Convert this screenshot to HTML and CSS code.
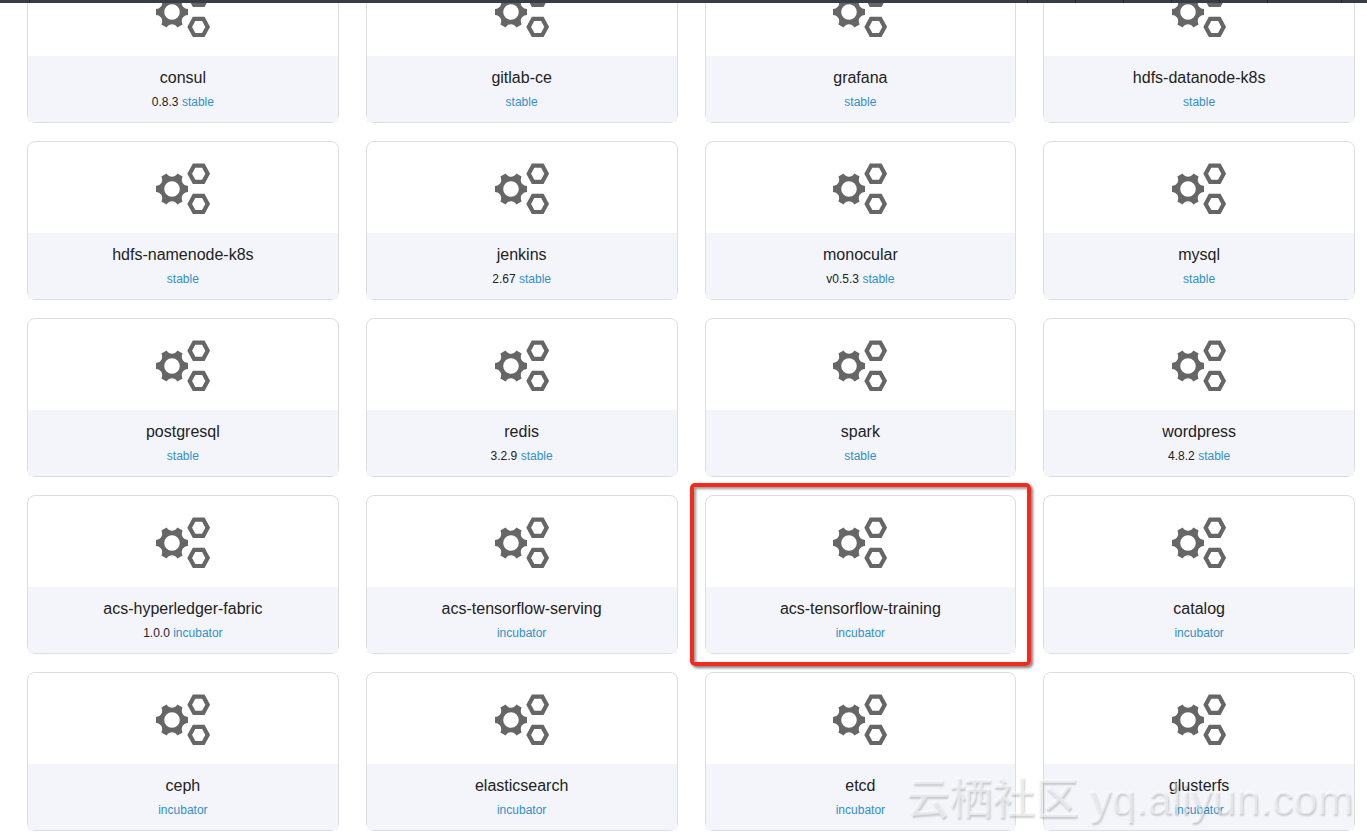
FILE: index.html
```
<!DOCTYPE html>
<html lang="en">
<head>
    <meta charset="UTF-8">
    <meta name="viewport" content="width=device-width, initial-scale=1.0">
    <title>App Catalog</title>
    <link rel="stylesheet" href="styles.css">
</head>
<body>
    <div class="topbar">
        <span class="topbar-item small"></span>
        <span class="topbar-item wide"></span>
        <span class="topbar-item"></span>
        <span class="topbar-item"></span>
        <span class="topbar-item"></span>
        <span class="topbar-item"></span>
        <span class="topbar-item"></span>
        <span class="topbar-item account"></span>
        <span class="topbar-item last"></span>
    </div>

    <main class="catalog" id="catalog"></main>

    <div class="watermark">云栖社区 yq.aliyun.com</div>

    <template id="card-template">
        <article class="card">
            <div class="card-media">
                <svg class="card-icon" viewBox="0 0 54 52" width="54" height="52" aria-hidden="true">
                    <path fill="#666" fill-rule="evenodd" transform="translate(16 26)" d="M16 -3V3C10.9 3.4 8.4 7.7 10.6 12.4L5.4 15.4C2.5 11.1 -2.5 11.1 -5.4 15.4L-10.6 12.4C-8.4 7.7 -10.9 3.4 -16 3V-3C-10.9 -3.4 -8.4 -7.7 -10.6 -12.4L-5.4 -15.4C-2.5 -11.1 2.5 -11.1 5.4 -15.4L10.6 -12.4C8.4 -7.7 10.9 -3.4 16 -3ZM7.8 0A7.8 7.8 0 1 0 -7.8 0A7.8 7.8 0 1 0 7.8 0Z"/>
                    <path fill="none" stroke="#666" stroke-width="4.2" d="M38.1 2.6H47.3L51.7 10.7L47.3 18.8H38.1L33.7 10.7ZM38.1 32.8H47.3L51.7 40.9L47.3 49H38.1L33.7 40.9Z"/>
                </svg>
            </div>
            <div class="card-info">
                <h2 class="card-name"></h2>
                <p class="card-meta"><span class="card-version"></span><a class="card-repo" href="#"></a></p>
            </div>
        </article>
    </template>

    <script>
        var charts = [
            { name: 'consul', version: '0.8.3', repo: 'stable' },
            { name: 'gitlab-ce', repo: 'stable' },
            { name: 'grafana', repo: 'stable' },
            { name: 'hdfs-datanode-k8s', repo: 'stable' },
            { name: 'hdfs-namenode-k8s', repo: 'stable' },
            { name: 'jenkins', version: '2.67', repo: 'stable' },
            { name: 'monocular', version: 'v0.5.3', repo: 'stable' },
            { name: 'mysql', repo: 'stable' },
            { name: 'postgresql', repo: 'stable' },
            { name: 'redis', version: '3.2.9', repo: 'stable' },
            { name: 'spark', repo: 'stable' },
            { name: 'wordpress', version: '4.8.2', repo: 'stable' },
            { name: 'acs-hyperledger-fabric', version: '1.0.0', repo: 'incubator' },
            { name: 'acs-tensorflow-serving', repo: 'incubator' },
            { name: 'acs-tensorflow-training', repo: 'incubator', marked: true },
            { name: 'catalog', repo: 'incubator' },
            { name: 'ceph', repo: 'incubator' },
            { name: 'elasticsearch', repo: 'incubator' },
            { name: 'etcd', repo: 'incubator' },
            { name: 'glusterfs', repo: 'incubator' }
        ];
        var catalog = document.getElementById('catalog');
        var template = document.getElementById('card-template');

        charts.forEach(function(chart) {
            var item = template.content.cloneNode(true);
            item.querySelector('.card-name').textContent = chart.name;
            item.querySelector('.card-version').textContent = chart.version ? chart.version + ' ' : '';
            item.querySelector('.card-repo').textContent = chart.repo;
            if (chart.marked) {
                item.querySelector('.card').classList.add('marked');
            }
            catalog.appendChild(item);
        });
    </script>
</body>
</html>
```
FILE: styles.css
```
* {
    box-sizing: border-box;
}
body {
    margin: 0;
    height: 100vh;
    overflow: hidden;
    background-color: #fff;
    color: #222;
    font-family: "Liberation Sans", Arial, sans-serif;
}

/* bottom edge of the dark navigation bar */
.topbar {
    position: relative;
    z-index: 2;
    display: flex;
    height: 3px;
    background-color: #373d41;
}
.topbar-item {
    width: 48px;
    border-right: 1px solid #22272b;
}
.topbar-item.small {
    width: 30px;
}
.topbar-item.wide {
    flex: 1;
}
.topbar-item.account {
    width: 74px;
}
.topbar-item.last {
    width: 25px;
    border-right: none;
}

/* the list is scrolled up under the bar */
.catalog {
    display: grid;
    grid-template-columns: repeat(4, 1fr);
    gap: 18px 27px;
    margin-top: -39px;
    padding: 0 12px 0 27px;
}
.card {
    position: relative;
    border: 1px solid #dcdddf;
    border-radius: 8px;
}
.card-media {
    display: flex;
    justify-content: center;
    height: 91px;
    padding-top: 21px;
}
.card-info {
    height: 66px;
    padding-top: 11px;
    background-color: #f4f5fa;
    text-align: center;
}
.card-name {
    margin: 0;
    font-size: 16px;
    font-weight: normal;
    line-height: 22px;
}
.card-meta {
    margin: 4px 0 0;
    font-size: 12px;
    line-height: 18px;
}
.card-repo {
    color: #328fc8;
    text-decoration: none;
}

.card.marked::after {
    content: "";
    position: absolute;
    inset: -13px -16px;
    border: 4px solid #f52a1d;
    border-radius: 5px;
    box-shadow: 2px 2px 3px rgba(0, 0, 0, 0.5), inset 2px 2px 3px rgba(0, 0, 0, 0.4);
}

.watermark {
    position: fixed;
    right: 14px;
    bottom: 4px;
    z-index: 3;
    color: rgba(255, 255, 255, 0.5);
    font-family: "Liberation Sans", "Noto Sans CJK SC", sans-serif;
    font-size: 43px;
    font-weight: 500;
    line-height: 60px;
    white-space: nowrap;
    text-shadow: 1px 2px 2px rgba(0, 0, 0, 0.18);
    pointer-events: none;
}
```
